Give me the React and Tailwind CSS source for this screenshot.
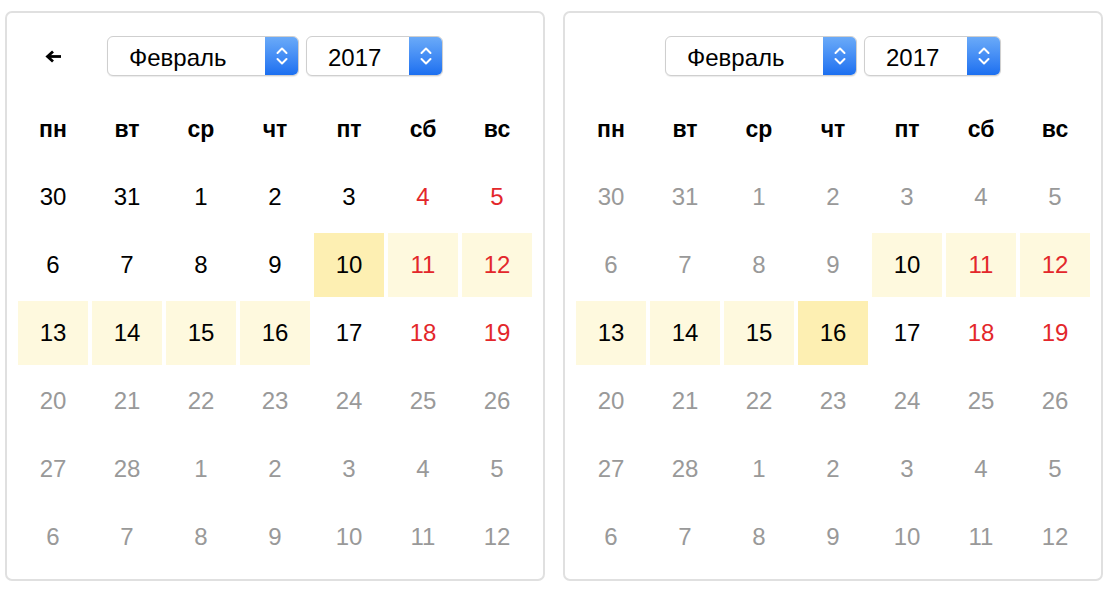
import React from 'react';

const WEEKDAYS = ['пн', 'вт', 'ср', 'чт', 'пт', 'сб', 'вс'];

const DAYS = [
  30, 31,
  ...Array.from({ length: 28 }, (_, i) => i + 1),
  ...Array.from({ length: 12 }, (_, i) => i + 1),
];

const Chevrons = () => (
  <svg width="14" height="22" viewBox="0 0 14 22" fill="none">
    <path d="M2.5 8 L7 3.5 L11.5 8" stroke="white" strokeWidth="2" strokeLinecap="round" strokeLinejoin="round" />
    <path d="M2.5 14 L7 18.5 L11.5 14" stroke="white" strokeWidth="2" strokeLinecap="round" strokeLinejoin="round" />
  </svg>
);

const Select = ({ value, width }) => (
  <div
    className={`flex h-[40px] ${width} items-stretch rounded-[6px] border border-[#cfcfcf] bg-white shadow-[0_1px_1px_rgba(0,0,0,0.08)] overflow-hidden`}
  >
    <div className="flex flex-1 items-center pl-[21px] pt-[3px] text-[24px] text-black">{value}</div>
    <div className="flex w-[33px] items-center justify-center bg-gradient-to-b from-[#6aaaf8] to-[#1b6ff0]">
      <Chevrons />
    </div>
  </div>
);

const Calendar = ({ showBack, enabledFrom, enabledTo, selected, rangeFrom, rangeTo }) => (
  <div className="w-[540px] rounded-[7px] border-2 border-[#e0e0e0] bg-white px-[11px] pt-[23px] pb-[10px]">
    <div className="relative flex h-[40px] justify-center gap-[7px]">
      {showBack && (
        <div className="absolute left-0 top-0 flex h-[40px] w-[70px] items-center justify-center">
          <svg width="17" height="13" viewBox="0 0 17 13" fill="none">
            <path d="M16 6.5 H3.5" stroke="black" strokeWidth="2.8" />
            <path d="M8 1.5 L2.5 6.5 L8 11.5" stroke="black" strokeWidth="2.8" />
          </svg>
        </div>
      )}
      <Select value="Февраль" width="w-[192px]" />
      <Select value="2017" width="w-[137px]" />
    </div>

    <div className="mt-[21px] grid grid-cols-[repeat(7,70px)] auto-rows-[64px] gap-[4px]">
      {WEEKDAYS.map((d) => (
        <div key={d} className="flex items-center justify-center text-[23px] font-bold text-black">
          {d}
        </div>
      ))}
      {DAYS.map((day, i) => {
        const enabled = i >= enabledFrom && i <= enabledTo;
        const weekend = i % 7 >= 5;
        let color = 'text-[#999999]';
        if (enabled) color = weekend ? 'text-[#e3272b]' : 'text-black';
        let bg = '';
        if (i === selected) bg = 'bg-[#fdefb2]';
        else if (i >= rangeFrom && i <= rangeTo) bg = 'bg-[#fef9de]';
        return (
          <div key={i} className={`flex items-center justify-center text-[24px] ${color} ${bg}`}>
            {day}
          </div>
        );
      })}
    </div>
  </div>
);

export default function App() {
  return (
    <div
      className="flex h-[592px] w-[1114px] items-start gap-[18px] bg-white pl-[5px] pt-[11px]"
      style={{ fontFamily: '"Liberation Sans", Arial, sans-serif' }}
    >
      <Calendar showBack enabledFrom={0} enabledTo={20} selected={11} rangeFrom={12} rangeTo={17} />
      <Calendar enabledFrom={11} enabledTo={20} selected={17} rangeFrom={11} rangeTo={16} />
    </div>
  );
}
